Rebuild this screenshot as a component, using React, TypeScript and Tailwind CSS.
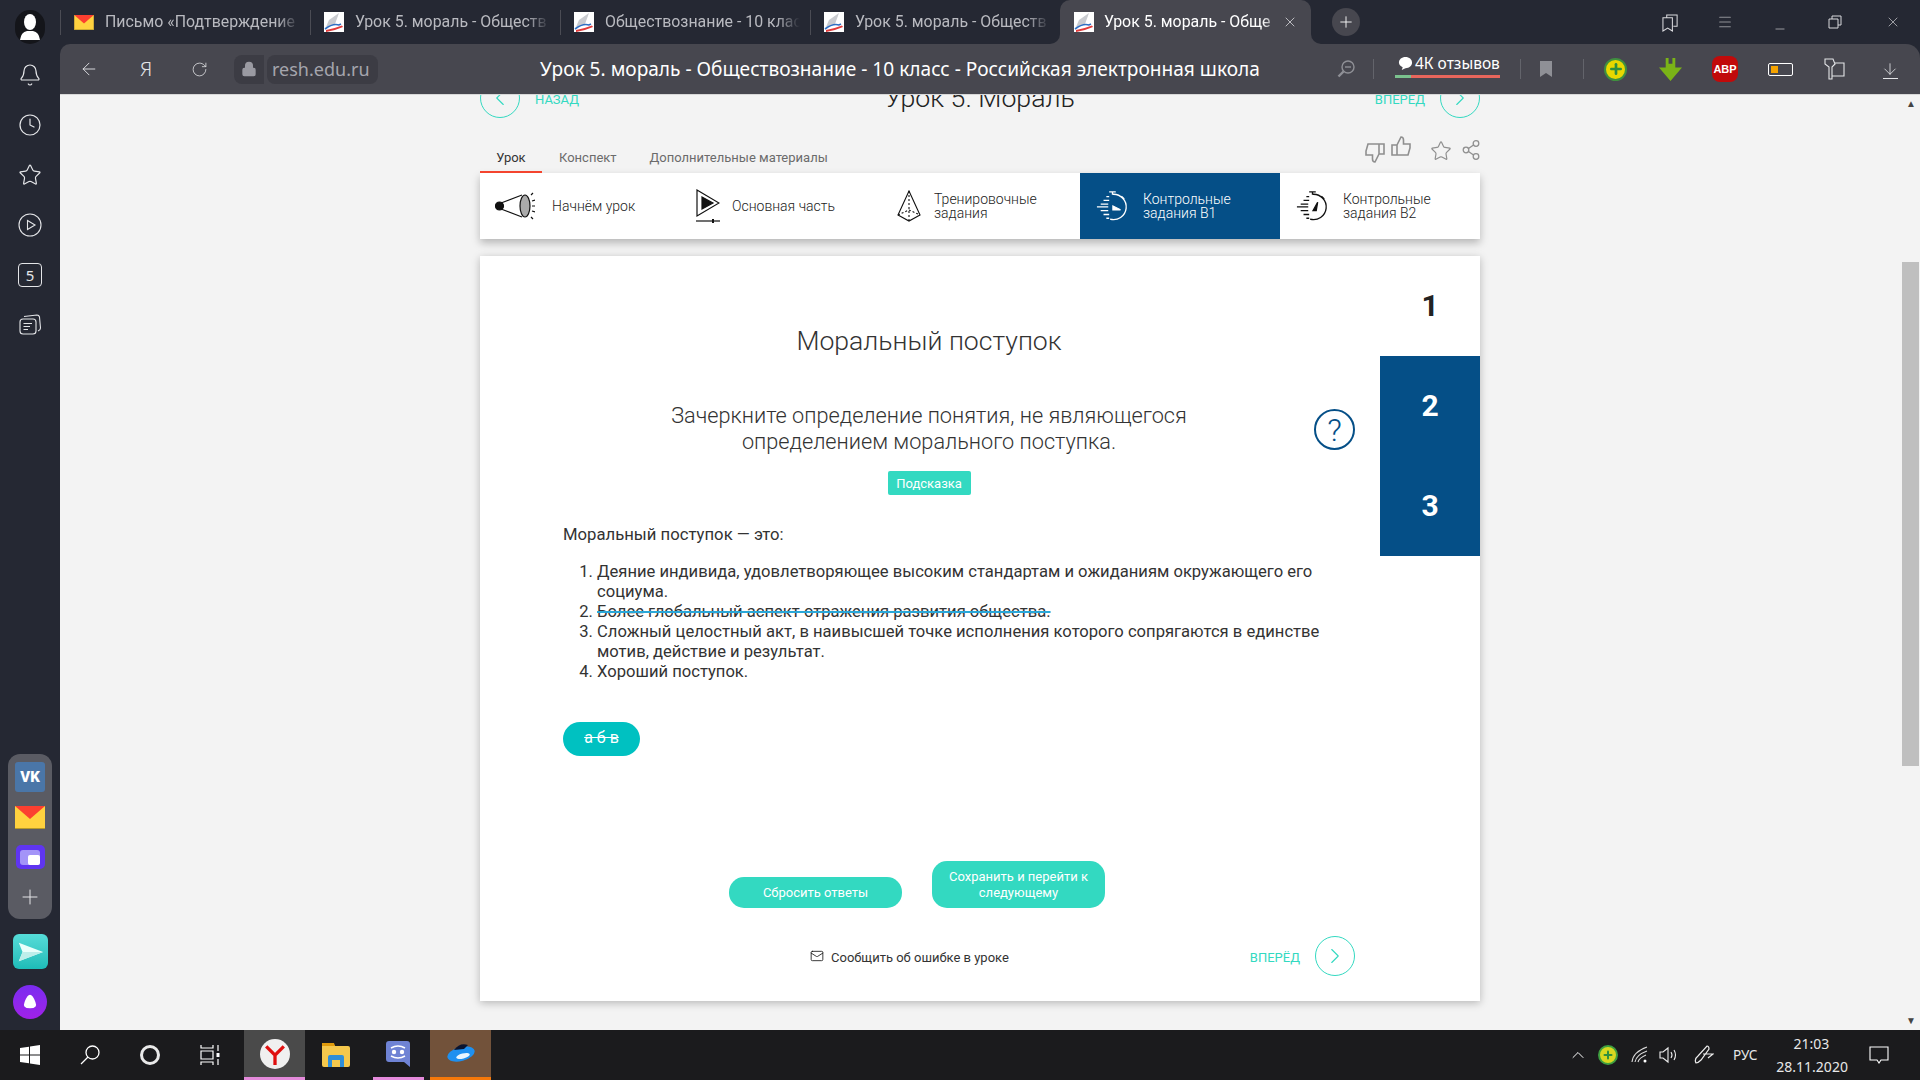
import React from 'react';
import { Bell, Clock, Star, ChevronLeft, ChevronRight, ArrowLeft, RotateCw, Lock, Plus, X, Minus, ArrowDown, ChevronUp, Mail, Menu } from 'lucide-react';

const Favicon = () => (
  <svg viewBox="0 0 20 20" className="w-5 h-5 shrink-0 bg-white">
    <path d="M15 1 L5 8 L2 15 L11 12 Z" fill="#c9cbd0" />
    <path d="M1 17 Q9 11 15 13 L17 12" fill="none" stroke="#2f6fc4" strokeWidth="1.6" />
    <path d="M2 20 Q10 19 19 15 L18 13.500 Q9 17 2 18 Z" fill="#e23b3b" />
  </svg>
);

const MailIcon = ({ cls }: { cls: string }) => (
  <svg viewBox="0 0 30 23" className={cls}>
    <rect width="30" height="23" fill="#ffd23f" />
    <path d="M0 0 H30 L15 13 Z" fill="#fc3f30" />
    <rect y="22" width="30" height="1" fill="#b79a2a" />
  </svg>
);

const Tab = ({ title, icon }: { title: string; icon: React.ReactNode }) => (
  <div className="w-[250px] h-11 flex items-center">
    <div className="w-px h-[25px] bg-[#4b4c54]" />
    <div className="ml-[13px] w-5 flex justify-center">{icon}</div>
    <div className="ml-[11px] w-[195px] whitespace-nowrap text-[15.9px] text-[#b9bac0] [mask-image:linear-gradient(to_right,black_88%,transparent)]">{title}</div>
  </div>
);

const SideIcon = ({ children }: { children: React.ReactNode }) => (
  <div className="h-[50px] flex items-center justify-center text-[#e4e5e8]">{children}</div>
);

const Divider = ({ cls }: { cls: string }) => <div className={`w-px h-5 bg-[#63646b] ${cls}`} />;

const Stopwatch = ({ dark }: { dark?: boolean }) => (
  <svg viewBox="0 0 34 34" className="w-8 h-8 shrink-0" fill="none" stroke="currentColor" strokeWidth="1.4">
    <path d="M18 4.500 A13.500 13.500 0 1 1 15 31" />
    <path d="M14 2 H21 M17.500 2 V5 M27 6.500 L30 9.500" />
    <path d="M11 7 H14 M8 11 H14 M5 15 H13 M1 18 H13 M5 22 H13 M8 26 H14 M11 30 H14" />
    {dark ? <path d="M18 22 L23 13 L21.500 22 Z" fill="currentColor" /> : <path d="M18 17 L26 21 L18 21 Z" fill="currentColor" />}
  </svg>
);

const CircleNav = ({ dir }: { dir: 'l' | 'r' }) => (
  <div className="w-10 h-10 rounded-full border border-[#33d9c1] flex items-center justify-center text-[#33d9c1] shrink-0">
    {dir === 'l' ? <ChevronLeft size={26} strokeWidth={1} /> : <ChevronRight size={26} strokeWidth={1} />}
  </div>
);

const Thumb = ({ down }: { down?: boolean }) => (
  <svg viewBox="0 0 20 20" className={`w-5 h-5 ${down ? 'rotate-180' : ''}`} fill="none" stroke="#8f8f8f" strokeWidth="1.6">
    <path d="M1 9 H6 V19 H1 Z M6 9 L10 1 Q12.500 1 12.500 4 V8 H19 V12 L17 19 H6" />
  </svg>
);

const lessonItems = [
  { label: ['Начнём урок'], w: 'ml-[15px]', tx: 'ml-[17px]' },
  { label: ['Основная часть'], w: 'ml-[16px]', tx: 'ml-[12px]' },
  { label: ['Тренировочные', 'задания'], w: 'ml-[17px]', tx: 'ml-[13px]' },
];

const LessonIcon = ({ i }: { i: number }) => {
  if (i === 0)
    return (
      <svg viewBox="0 0 40 30" className="w-10 h-[30px] shrink-0" fill="none" stroke="#111" strokeWidth="1.2">
        <circle cx="4.500" cy="15" r="4" fill="#111" />
        <path d="M6 12 L27 4 M6 18 L27 26" />
        <ellipse cx="30" cy="15" rx="5" ry="11" fill="#aaa" />
        <path d="M36 4 L38 2 M37 10 L40 9 M37 15 H40 M37 20 L40 21 M36 26 L38 28" />
      </svg>
    );
  if (i === 1)
    return (
      <svg viewBox="0 0 24 34" className="w-6 h-[34px] shrink-0" fill="none" stroke="#111" strokeWidth="1.2">
        <path d="M1 1 L23 14 L1 27 Z" />
        <path d="M6 8 L17 14 L6 20 Z" fill="#111" />
        <path d="M0 32 H24" />
        <path d="M17 30 V34" strokeWidth="2" />
      </svg>
    );
  return (
    <svg viewBox="0 0 24 32" className="w-6 h-8 shrink-0" fill="none" stroke="#111" strokeWidth="1.1">
      <path d="M12 1 L1 25 L12 31 L23 25 Z" />
      <path d="M12 1 L12 31 M1 25 L12 20 L23 25" strokeDasharray="2 2" />
    </svg>
  );
};

const App = () => {
  return (
    <div className="w-[1920px] h-[1080px] flex flex-col overflow-hidden font-['Roboto',sans-serif]">
      <div className="flex flex-1 min-h-0">
        {/* left browser sidebar */}
        <div className="w-[60px] bg-[#252833] flex flex-col items-center shrink-0">
          <div className="w-[30px] h-[34px] mt-[10px] rounded-full bg-[#14151a] flex items-center justify-center">
            <svg viewBox="0 0 24 28" className="w-6 h-7" fill="#fff">
              <ellipse cx="12" cy="9" rx="6" ry="8" />
              <path d="M2 27 Q3 19 9 18 H15 Q21 19 22 27 Z" />
            </svg>
          </div>
          <div className="mt-[6px] w-full">
            <SideIcon><Bell size={24} strokeWidth={1.2} /></SideIcon>
            <SideIcon><Clock size={24} strokeWidth={1.2} /></SideIcon>
            <SideIcon><Star size={24} strokeWidth={1.2} /></SideIcon>
            <SideIcon>
              <svg viewBox="0 0 24 24" className="w-6 h-6" fill="none" stroke="currentColor" strokeWidth="1.1"><circle cx="12" cy="12" r="11" /><path d="M9.500 7.500 L17 12 L9.500 16.500 Z" /></svg>
            </SideIcon>
            <SideIcon>
              <div className="w-6 h-6 rounded-[4px] border border-[#e4e5e8] text-[15px] leading-[22px] text-center font-['Noto_Sans',sans-serif]">5</div>
            </SideIcon>
            <SideIcon>
              <svg viewBox="0 0 24 24" className="w-6 h-6" fill="none" stroke="currentColor" strokeWidth="1.1"><rect x="2" y="6" width="16" height="15" rx="3" /><path d="M6 3.500 L19 2 Q21 2 21.500 4 L22.500 15 Q22.500 17 20 18 M5.500 10.500 H14 M5.500 13.500 H12 M5.500 16.500 H10" /></svg>
            </SideIcon>
          </div>
          <div className="mt-auto mb-[11px] flex flex-col items-center">
            <div className="w-[44px] h-[165px] rounded-[12px] bg-[#5a5b63] flex flex-col items-center pt-2">
              <div className="w-[30px] h-[30px] rounded-[3px] bg-[#4a76a8] flex items-center justify-center text-white font-black text-[15px] leading-none">VK</div>
              <MailIcon cls="w-[30px] h-[23px] mt-[14px]" />
              <div className="w-[29px] h-6 mt-4 rounded-[5px] bg-[#5f35f0] flex items-center justify-center">
                <div className="w-[20px] h-[15px] rounded-[3px] bg-[#a394f8] flex items-end justify-end"><div className="w-3 h-[10px] rounded-[2px] bg-white" /></div>
              </div>
              <Plus size={24} strokeWidth={1} className="text-[#e4e5e8] mt-4" />
            </div>
            <div className="w-[35px] h-[35px] mt-[15px] rounded-[6px] bg-gradient-to-b from-[#55dcd8] to-[#1cbcb8] flex items-center justify-center">
              <svg viewBox="0 0 30 30" className="w-7 h-7"><path d="M3 5 L29 15 L3 25 L7 15 Z" fill="#eafffb" /><path d="M7 15 L29 15 L3 25 Z" fill="#bdeeea" /></svg>
            </div>
            <div className="w-[34px] h-[34px] mt-4 rounded-full bg-gradient-to-b from-[#7a2bf0] to-[#a020e8] flex items-center justify-center">
              <svg viewBox="0 0 20 20" className="w-[18px] h-[18px]"><path d="M10 2 Q13 2 16 10 Q19 17 10 17 Q1 17 4 10 Q7 2 10 2 Z" fill="#fff" /></svg>
            </div>
          </div>
        </div>

        <div className="flex-1 min-w-0 flex flex-col bg-[#252833]">
          {/* tab strip */}
          <div className="h-11 flex bg-[#47474f] shrink-0">
            <div className="flex bg-[#252833] rounded-br-[10px]">
              <Tab title="Письмо «Подтверждение" icon={<MailIcon cls="w-5 h-[15px]" />} />
              <Tab title="Урок 5. мораль - Обществ" icon={<Favicon />} />
              <Tab title="Обществознание - 10 клас" icon={<Favicon />} />
              <Tab title="Урок 5. мораль - Обществ" icon={<Favicon />} />
            </div>
            <div className="bg-[#252833]">
              <div className="w-[251px] h-11 bg-[#47474f] rounded-t-[10px] flex items-center pl-[14px]">
                <Favicon />
                <div className="ml-[10px] w-[176px] whitespace-nowrap text-[15.9px] text-white [mask-image:linear-gradient(to_right,black_90%,transparent)]">Урок 5. мораль - Обще</div>
                <X size={16} strokeWidth={1.2} className="ml-[2px] text-[#d9d9dd]" />
              </div>
            </div>
            <div className="flex-1 bg-[#252833] rounded-bl-[10px] flex items-center text-[#d9d9dd]">
              <div className="ml-[21px] w-7 h-7 rounded-full bg-[#47474f] flex items-center justify-center text-white"><Plus size={18} strokeWidth={1.2} /></div>
              <svg viewBox="0 0 18 20" className="ml-[302px] w-[17px] h-[19px]" fill="none" stroke="currentColor" strokeWidth="1.1"><path d="M1 5 H11 V19 L6 16 L1 19 Z M5 5 V2 H16 V14 L12 14" /></svg>
              <Menu size={16} strokeWidth={1.6} className="ml-[38px] text-[#8f9096]" />
              <Minus size={14} strokeWidth={1.1} className="ml-[40px] mt-[14px]" />
              <svg viewBox="0 0 14 14" className="ml-[41px] w-[14px] h-[14px]" fill="none" stroke="currentColor" strokeWidth="1"><path d="M1 4 H10 V13 H1 Z M4 4 V1 H13 V10 H10" /></svg>
              <X size={16} strokeWidth={1} className="ml-[43px]" />
            </div>
          </div>

          {/* address bar */}
          <div className="h-[50px] bg-[#47474f] rounded-tl-[10px] rounded-tr-[14px] flex items-center shrink-0 text-[#e4e5e8] font-['Noto_Sans',sans-serif]">
            <ArrowLeft size={20} strokeWidth={1.1} className="ml-[19px]" />
            <span className="ml-[41px] text-[20px] w-[12px] font-light">Я</span>
            <RotateCw size={17} strokeWidth={1.1} className="ml-[39px]" />
            <div className="ml-[26px] w-[30px] h-[29px] rounded-l-[8px] bg-[#3c3c44] flex items-center justify-center text-[#9a9aa2]"><Lock size={16} fill="#9a9aa2" /></div>
            <div className="ml-[3px] w-[111px] h-[29px] rounded-[8px] bg-[#3c3c44] pl-[5px] text-[18px] leading-[29px] text-[#a5a5ad]">resh.edu.ru</div>
            <div className="ml-[162px] w-[718px] text-[19.1px] text-white whitespace-nowrap">Урок 5. мораль - Обществознание - 10 класс - Российская электронная школа</div>
            <svg viewBox="0 0 18 18" className="ml-[79px] w-[18px] h-[18px]" fill="none" stroke="#8f9096" strokeWidth="1.400"><circle cx="11" cy="7" r="6" /><path d="M8 7 H14" /><path d="M6.500 11.500 L1.500 16.500" strokeWidth="2.400" /></svg>
            <Divider cls="ml-[18px]" />
            <div className="ml-[21px] w-[105px] relative h-[36px] shrink-0">
              <div className="flex items-center text-white whitespace-nowrap text-[15.5px] leading-[24px]">
                <svg viewBox="0 0 16 16" className="ml-[3px] w-[15px] h-[15px]" fill="#fff"><path d="M8 1 C12 1 15 3.500 15 7 C15 10.500 12 13 8 13 L4 15 L5 12 C2.500 11 1 9 1 7 C1 3.500 4 1 8 1 Z" /></svg>
                <span className="ml-[2px]">4К отзывов</span>
              </div>
              <div className="absolute left-0 top-[24px] w-[105px] h-[3px] flex">
                <div className="w-[16px] bg-[#7bc28e]" />
                <div className="flex-1 bg-[#e8665c]" />
              </div>
            </div>
            <Divider cls="ml-[20px]" />
            <svg viewBox="0 0 12 16" className="ml-[19px] w-3 h-4" fill="#8f9096"><path d="M0 0 H12 V16 L6 12 L0 16 Z" /></svg>
            <Divider cls="ml-[31px]" />
            <div className="ml-[20px] w-[23px] h-[23px] rounded-full bg-[#e8d800] border-2 border-[#3f8f3f] flex items-center justify-center text-[#2f8f3f]"><Plus size={16} strokeWidth={4} /></div>
            <svg viewBox="0 0 26 24" className="ml-[31px] w-[25px] h-[23px]"><path d="M8 0 H11 V6 H15 V0 H18 V10 H25 L13 24 L1 10 H8 Z" fill="#7ab317" /></svg>
            <div className="ml-[29px] w-[26px] h-[26px] rounded-[8px] bg-[#c10a0a] flex items-center justify-center text-white text-[11px] font-bold font-['Liberation_Sans',sans-serif]">ABP</div>
            <div className="ml-[30px] w-[25px] h-[13px] rounded-[2px] border border-white p-[2px] flex">
              <div className="w-[7px] bg-[#f5a300]" />
            </div>
            <svg viewBox="0 0 22 24" className="ml-[30px] w-[22px] h-6" fill="none" stroke="currentColor" strokeWidth="1.1"><path d="M2 2 H10 L12 7 L9 10 V22 H6 V10 L2 7 Z M12 6 H21 V19 H9" /></svg>
            <div className="ml-[36px] flex flex-col items-center">
              <ArrowDown size={18} strokeWidth={1.1} />
              <div className="w-[15px] h-px bg-[#e4e5e8]" />
            </div>
          </div>

          {/* page */}
          <div className="flex-1 min-h-0 flex bg-[#f3f3f3] border-t border-[#d8d8d8]">
            <div className="flex-1 min-w-0 overflow-hidden">
              <div className="ml-[420px] w-[1000px] -mt-[17px]">
                <div className="flex items-center h-10">
                  <CircleNav dir="l" />
                  <span className="ml-[15px] mt-[3px] text-[13px] text-[#33d9c1]">НАЗАД</span>
                  <div className="flex-1 text-center text-[26.7px] font-light text-[#222] pl-[6px]">Урок 5. Мораль</div>
                  <span className="mt-[3px] text-[13px] text-[#33d9c1] mr-[15px]">ВПЕРЕД</span>
                  <CircleNav dir="r" />
                </div>

                <div className="mt-[25px] h-[30px] flex items-start text-[13px] text-[#6b6b6b]">
                  <div className="w-[62px] h-[30px] border-b-2 border-[#f4442e] text-center leading-[29px] text-[#333]">Урок</div>
                  <span className="ml-[17px] leading-[29px]">Конспект</span>
                  <span className="ml-[33px] leading-[29px]">Дополнительные материалы</span>
                  <div className="ml-auto flex items-start">
                    <div><Thumb down /></div>
                    <div className="ml-[6px] -mt-[7px]"><Thumb /></div>
                    <Star size={22} strokeWidth={1.3} className="ml-[19px] -mt-[3px] text-[#8f8f8f]" />
                    <svg viewBox="0 0 18 20" className="ml-[10px] -mt-[3px] w-[18px] h-5" fill="none" stroke="#8f8f8f" strokeWidth="1.3"><circle cx="14" cy="3.500" r="2.800" /><circle cx="4" cy="10" r="2.800" /><circle cx="14" cy="16.500" r="2.800" /><path d="M6.500 8.500 L11.500 5 M6.500 11.500 L11.500 15" /></svg>
                  </div>
                </div>

                <div className="h-[66px] bg-white flex shadow-[0_4px_8px_rgba(0,0,0,0.25)] text-[14px] font-light leading-[14px] text-[#222]">
                  {lessonItems.map((it, i) => (
                    <div key={i} className="w-[200px] flex items-center">
                      <div className={it.w}><LessonIcon i={i} /></div>
                      <div className={it.tx}>{it.label.map(l => <div key={l}>{l}</div>)}</div>
                    </div>
                  ))}
                  <div className="w-[200px] bg-[#054f87] text-white flex items-center pl-4">
                    <Stopwatch />
                    <div className="ml-[15px]"><div>Контрольные</div><div>задания В1</div></div>
                  </div>
                  <div className="w-[200px] flex items-center pl-4 text-[#111]">
                    <Stopwatch dark />
                    <div className="ml-[15px] text-[#222]"><div>Контрольные</div><div>задания В2</div></div>
                  </div>
                </div>

                {/* task card */}
                <div className="mt-[17px] h-[745px] bg-white flex shadow-[0_2px_8px_rgba(0,0,0,0.25)]">
                  <div className="w-[900px] pl-[83px] text-[#333]">
                    <div className="w-[732px] pt-[70px] text-center text-[26.6px] leading-[30px] font-light text-[#333]">Моральный поступок</div>
                    <div className="mt-[47px] flex items-start">
                      <div className="w-[732px] text-center text-[21.7px] leading-[26px] font-light">Зачеркните определение понятия, не являющегося<br />определением морального поступка.</div>
                      <div className="ml-[19px] mt-[6px] w-[41px] h-[41px] rounded-full border-2 border-[#054f87] flex items-center justify-center text-[32px] font-light text-[#054f87]">?</div>
                    </div>
                    <div className="w-[732px] flex justify-center mt-4">
                      <div className="w-[83px] h-6 rounded-[2px] bg-[#33d9c1] text-white text-[13px] leading-[25px] text-center">Подсказка</div>
                    </div>
                    <div className="mt-[30px] text-[16.7px] leading-5">Моральный поступок — это:</div>
                    <ol className="mt-[17px] w-[792px] pl-[34px] list-decimal text-[16.6px] leading-5">
                      <li>Деяние индивида, удовлетворяющее высоким стандартам и ожиданиям окружающего его социума.</li>
                      <li><span className="line-through decoration-[#2aa8d8] decoration-2">Более глобальный аспект отражения развития общества.</span></li>
                      <li>Сложный целостный акт, в наивысшей точке исполнения которого сопрягаются в единстве мотив, действие и результат.</li>
                      <li>Хороший поступок.</li>
                    </ol>
                    <div className="mt-[40px] w-[77px] h-[34px] rounded-[17px] bg-[#00c1c1] text-white text-[16px] leading-[32px] text-center"><span className="line-through">а б в</span></div>
                    <div className="mt-[105px] ml-[166px] flex items-end gap-[30px] text-[13px] text-white">
                      <div className="w-[173px] h-[31px] rounded-[15px] bg-[#33d9c1] leading-[31px] text-center">Сбросить ответы</div>
                      <div className="w-[173px] h-[47px] rounded-[15px] bg-[#33d9c1] leading-4 pt-2 text-center">Сохранить и перейти к следующему</div>
                    </div>
                    <div className="mt-[28px] w-[792px] h-10 flex items-center">
                      <Mail size={14} strokeWidth={1.4} className="ml-[247px] text-[#111]" />
                      <span className="ml-[7px] mt-[3px] text-[13px] text-[#333]">Сообщить об ошибке в уроке</span>
                      <span className="ml-auto mt-[3px] mr-[15px] text-[13px] text-[#33d9c1]">ВПЕРЁД</span>
                      <CircleNav dir="r" />
                    </div>
                  </div>
                  <div className="w-[100px] text-[30px] font-bold">
                    <div className="h-[100px] pb-[2px] flex items-center justify-center text-[#222]">1</div>
                    <div className="h-[100px] pb-[2px] flex items-center justify-center bg-[#054f87] text-white">2</div>
                    <div className="h-[100px] pb-[2px] flex items-center justify-center bg-[#054f87] text-white">3</div>
                  </div>
                </div>
              </div>
            </div>
            {/* scrollbar */}
            <div className="w-[19px] shrink-0 bg-[#f3f3f3] flex flex-col pl-px pb-[4px]">
              <div className="h-[18px] flex items-center justify-center text-[10px] leading-none text-[#444]">▲</div>
              <div className="mt-[149px] w-[17px] h-[504px] bg-[#bfbfbf]" />
              <div className="mt-auto text-center text-[10px] leading-none text-[#444]">▼</div>
            </div>
          </div>
        </div>
      </div>

      {/* windows taskbar */}
      <div className="h-[50px] bg-[#1b1b1d] flex items-center shrink-0 text-white">
        <svg viewBox="0 0 20 20" className="ml-5 w-5 h-5" fill="#fff"><path d="M0 3 L9 1.800 V9.500 H0 Z M10 1.600 L20 0 V9.500 H10 Z M0 10.500 H9 V18.200 L0 17 Z M10 10.500 H20 V20 L10 18.400 Z" /></svg>
        <svg viewBox="0 0 20 20" className="ml-10 w-5 h-5" fill="none" stroke="#fff" strokeWidth="1.300"><circle cx="12.500" cy="7.500" r="6.500" /><path d="M8 12 L1 19" /></svg>
        <div className="ml-10 w-5 h-5 rounded-full border-[3px] border-[#e9e9e9]" />
        <svg viewBox="0 0 20 20" className="ml-10 w-5 h-5" fill="none" stroke="#fff" strokeWidth="1.200"><path d="M1 0 V3 H13 V0 M1 20 V17 H13 V20 M1 6 H13 V14 H1 Z M18 0 V6 M18 14 V20" /><rect x="16.500" y="8" width="3" height="4" fill="#fff" stroke="none" /></svg>
        <div className="ml-[24px] w-[61px] h-[50px] bg-[#4a4a4a] border-b-[3px] border-[#e48adb] flex items-center justify-center">
          <div className="w-[30px] h-[30px] rounded-full bg-[#f0f0f0] flex items-center justify-center">
            <svg viewBox="0 0 20 20" className="w-[22px] h-[22px]" fill="none" stroke="#e01010" strokeWidth="3"><path d="M2 3 L10 11 L18 3 M10 11 V20" /></svg>
          </div>
        </div>
        <svg viewBox="0 0 28 24" className="ml-[17px] w-[28px] h-6"><path d="M0 2 Q0 0 2 0 H11 L13 3 H26 Q28 3 28 5 V22 Q28 24 26 24 H2 Q0 24 0 22 Z" fill="#f5c84c" /><path d="M0 0 H12 L13 3 H0 Z" fill="#e09b0c" /><path d="M6 24 V14 Q6 12 8 12 H20 Q22 12 22 14 V24 H18 V17 H10 V24 Z" fill="#2f8ed8" /></svg>
        <div className="ml-[23px] w-[51px] h-[50px] border-b-[3px] border-[#e48adb] flex items-center pl-[13px]">
          <svg viewBox="0 0 24 26" className="w-6 h-[26px]"><path d="M3 0 H21 Q24 0 24 3 V26 L18 21 H3 Q0 21 0 18 V3 Q0 0 3 0 Z" fill="#6f83d4" /><circle cx="8" cy="11" r="2.200" fill="#fff" /><circle cx="16" cy="11" r="2.200" fill="#fff" /><path d="M5 7 Q12 3 19 7 M5 15 Q12 19 19 15" fill="none" stroke="#fff" strokeWidth="1.500" /></svg>
        </div>
        <div className="ml-[6px] w-[61px] h-[50px] bg-[#72523a] border-b-[3px] border-[#f5780a] flex items-center justify-center">
          <svg viewBox="0 0 30 22" className="w-[30px] h-[22px]"><ellipse cx="15" cy="11" rx="14" ry="7" fill="#1e90f0" transform="rotate(-15 15 11)" /><path d="M8 7 Q14 -1 22 2 L18 6 Z" fill="#0a1430" /><ellipse cx="17" cy="13" rx="7" ry="2.500" fill="#e9f6ff" transform="rotate(-15 17 13)" /></svg>
        </div>
        <ChevronUp size={20} strokeWidth={1.2} className="ml-[1077px]" />
        <div className="ml-[10px] w-5 h-5 rounded-full bg-[#d8d820] border-2 border-[#3f9f3f] flex items-center justify-center text-[#2f8f3f]"><Plus size={12} strokeWidth={4} /></div>
        <svg viewBox="0 0 18 18" className="ml-[13px] w-[18px] h-[18px]" fill="none" stroke="#ddd" strokeWidth="1.100"><path d="M1 16 Q2 6 16 1 M4 16 Q5 9 16 5 M7 16 Q8 12 15 9" /><circle cx="14" cy="15" r="1.500" fill="#fff" stroke="none" /></svg>
        <svg viewBox="0 0 20 18" className="ml-[10px] w-5 h-[18px]" fill="none" stroke="#eee" strokeWidth="1.100"><path d="M1 6 H4 L9 2 V16 L4 12 H1 Z M12 6 Q14 9 12 12 M15 4 Q18 9 15 14" /></svg>
        <svg viewBox="0 0 20 20" className="ml-[15px] w-5 h-5" fill="none" stroke="#eee" strokeWidth="1.200"><path d="M2 18 Q0 14 4 11 L13 1 Q15 1 15 4 L7 15 Q4 18 2 18 Z M9 9 H19 L14 13" /></svg>
        <span className="ml-[19px] text-[13.5px] font-['Noto_Sans',sans-serif] text-[#e8e8e8]">РУС</span>
        <div className="ml-[19px] w-[70px] text-center text-[14px] leading-[23px] font-['Noto_Sans',sans-serif] text-[#e8e8e8] whitespace-nowrap"><div>21:03</div><div>28.11.2020</div></div>
        <svg viewBox="0 0 20 18" className="ml-[23px] w-5 h-[18px]" fill="none" stroke="#fff" strokeWidth="1.100"><path d="M1 1 H19 V14 H12 L10 17 L8 14 H1 Z" /></svg>
      </div>
    </div>
  );
};

export default App;
